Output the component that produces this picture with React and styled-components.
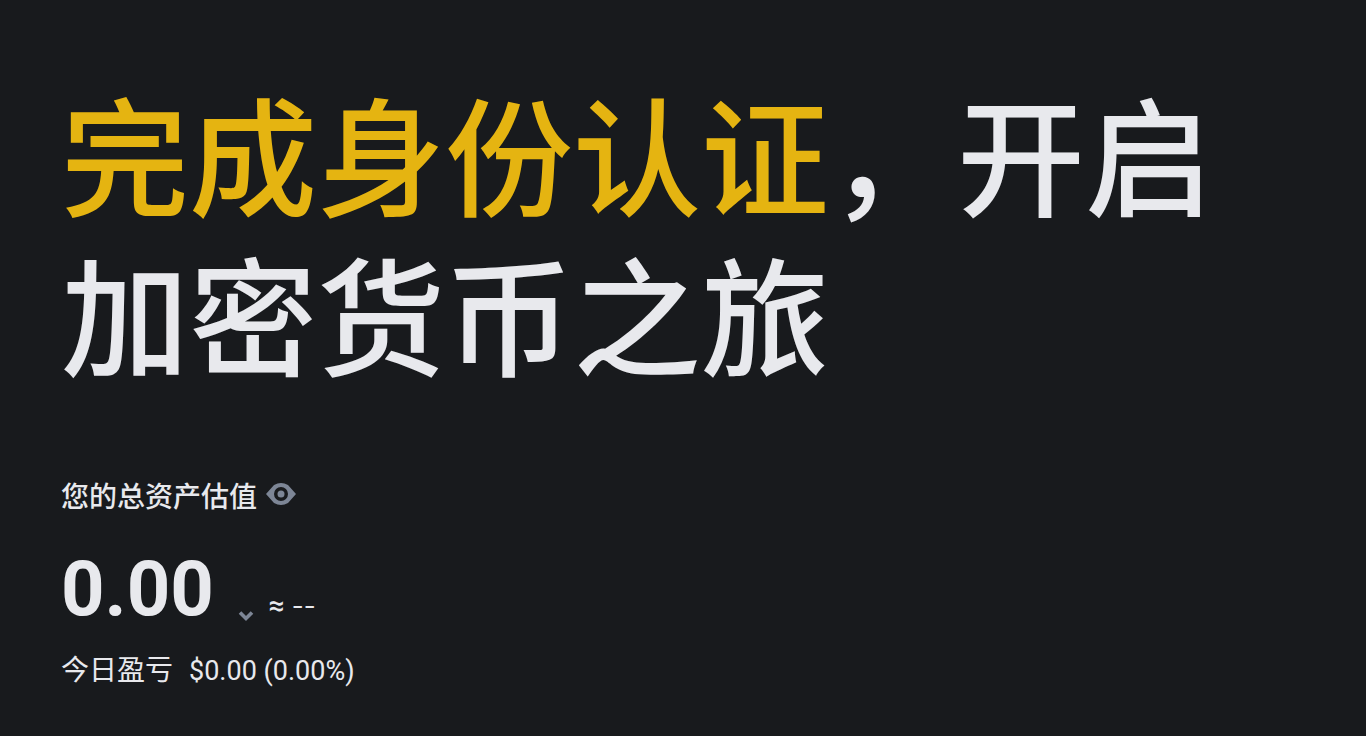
import React from 'react';
import styled, { createGlobalStyle } from 'styled-components';

const GlobalStyle = createGlobalStyle`
  *, *::before, *::after { box-sizing: border-box; }
  body {
    margin: 0;
    background: #181a1d;
    color: #e8e9ed;
    font-family: Roboto, "Noto Sans CJK SC", sans-serif;
  }
`;

const Page = styled.main`
  min-height: 100vh;
  padding: 72px 61px 40px;
`;

const Title = styled.h1`
  margin: 0;
  font-family: "Noto Sans CJK SC", sans-serif;
  font-size: 128px;
  line-height: 160px;
  font-weight: 500;
`;

const Accent = styled.span`
  color: #e5b411;
`;

const LabelRow = styled.div`
  display: flex;
  align-items: flex-start;
  gap: 8px;
  margin-top: 84px;
  font-size: 28px;
  line-height: 44px;
  font-weight: 500;
`;

const IconButton = styled.button`
  display: flex;
  padding: 0;
  border: 0;
  background: none;
  color: #7d8696;
  cursor: pointer;
`;

const EyeButton = styled(IconButton)`
  margin-top: 6px;
`;

const BalanceRow = styled.div`
  display: flex;
  align-items: flex-end;
  margin-top: 21px;
`;

const Amount = styled.strong`
  font-size: 76px;
  line-height: 96px;
  font-weight: 700;
`;

const UnitButton = styled(IconButton)`
  margin: 0 15px 15px 24px;
`;

const Estimate = styled.span`
  display: flex;
  gap: 7px;
  padding-bottom: 7px;
  font-size: 28px;
  line-height: 48px;
  font-weight: 500;
`;

const Placeholder = styled.span`
  font-family: Inter, sans-serif;
  font-size: 26px;
  font-weight: 400;
`;

const ProfitRow = styled.div`
  display: flex;
  gap: 16px;
  margin-top: 12px;
  font-size: 28px;
  line-height: 44px;
  font-weight: 400;
`;

const ProfitValue = styled.span`
  font-size: 27px;
`;

export default function App() {
  return (
    <>
      <GlobalStyle />
      <Page lang="zh-CN">
        <Title><Accent>完成身份认证</Accent>，开启<br />加密货币之旅</Title>
        <LabelRow>
          <span>您的总资产估值</span>
          <EyeButton type="button" aria-label="隐藏余额">
            <svg width="32" height="24" viewBox="0 0 32 24">
              <path fill="currentColor" fillRule="evenodd" d="M9 3Q16-1 23 3L31 12L23 21Q16 25 9 21L1 12ZM16 5a7 7 0 1 0 0 14a7 7 0 1 0 0-14Z" />
              <circle cx="16" cy="12" r="3.5" fill="currentColor" />
            </svg>
          </EyeButton>
        </LabelRow>
        <BalanceRow>
          <Amount>0.00</Amount>
          <UnitButton type="button" aria-label="选择币种">
            <svg width="16" height="12" viewBox="0 0 16 12">
              <path d="M2 2.5l6 6 6-6" fill="none" stroke="currentColor" strokeWidth="3.6" />
            </svg>
          </UnitButton>
          <Estimate>≈<Placeholder>--</Placeholder></Estimate>
        </BalanceRow>
        <ProfitRow>
          <span>今日盈亏</span>
          <ProfitValue>$0.00 (0.00%)</ProfitValue>
        </ProfitRow>
      </Page>
    </>
  );
}
